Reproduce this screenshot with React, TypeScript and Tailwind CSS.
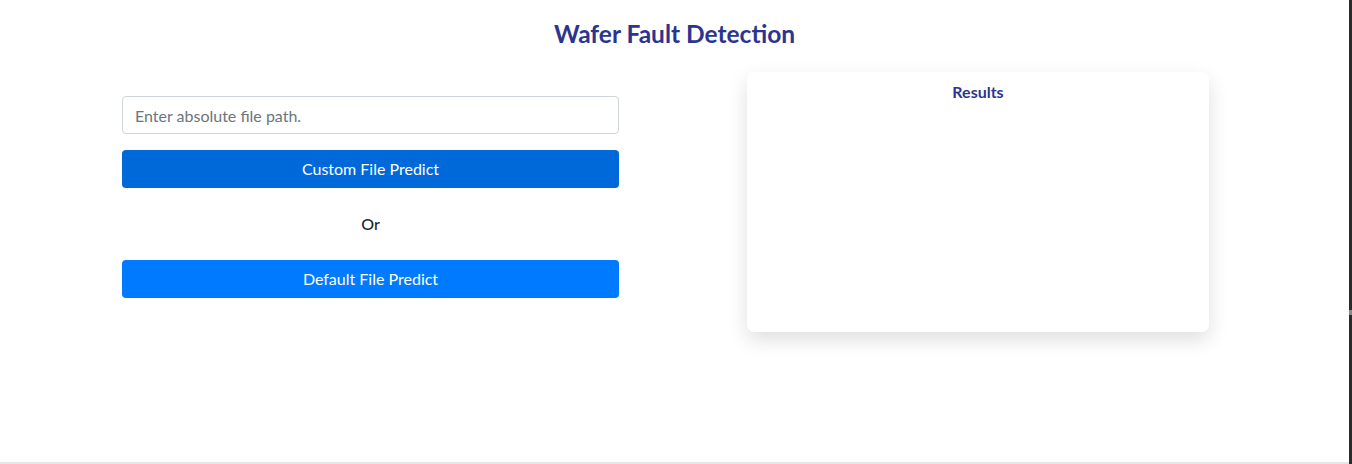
export default function App() {
  return (
    <div className="flex h-[464px] w-full bg-white font-['Lato','Noto_Sans',sans-serif]">
      <div className="flex h-full flex-1 flex-col border-b-2 border-[#e4e7eb]">
        {/* Header */}
        <h1 className="pt-[19px] text-center text-[24.5px] font-bold leading-[30px] text-[#2b3590]">
          Wafer Fault Detection
        </h1>

        {/* Main */}
        <div className="mt-[23px] flex items-start pl-[122px]">
          <div className="mt-[24px] flex w-[497px] flex-col">
            <input
              type="text"
              placeholder="Enter absolute file path."
              className="h-[38px] w-full rounded-[4px] border border-[#ced4da] px-[12px] text-[16px] text-[#495057] placeholder:text-[#6c757d] focus:outline-none"
            />
            <button className="mt-[16px] h-[38px] w-full rounded-[4px] bg-[#0069d9] text-[16px] text-white">
              Custom File Predict
            </button>
            <p className="mt-[25px] text-center text-[16px] font-medium leading-[22px] text-[#212529]">
              Or
            </p>
            <button className="mt-[25px] h-[38px] w-full rounded-[4px] bg-[#007bff] text-[16px] text-white">
              Default File Predict
            </button>
          </div>

          <div className="ml-[128px] h-[260px] w-[462px] rounded-[7px] bg-white pt-[10px] shadow-[0_8px_20px_rgba(0,0,0,0.13)]">
            <h5 className="text-center text-[16px] font-bold leading-[20px] text-[#2b3590]">
              Results
            </h5>
          </div>
        </div>
      </div>

      {/* Window edge */}
      <div className="relative h-full w-[3px] bg-[#2b2b2b]">
        <div className="absolute left-0 top-[310px] h-[5px] w-[3px] bg-[#8a8a8a]" />
      </div>
    </div>
  );
}
